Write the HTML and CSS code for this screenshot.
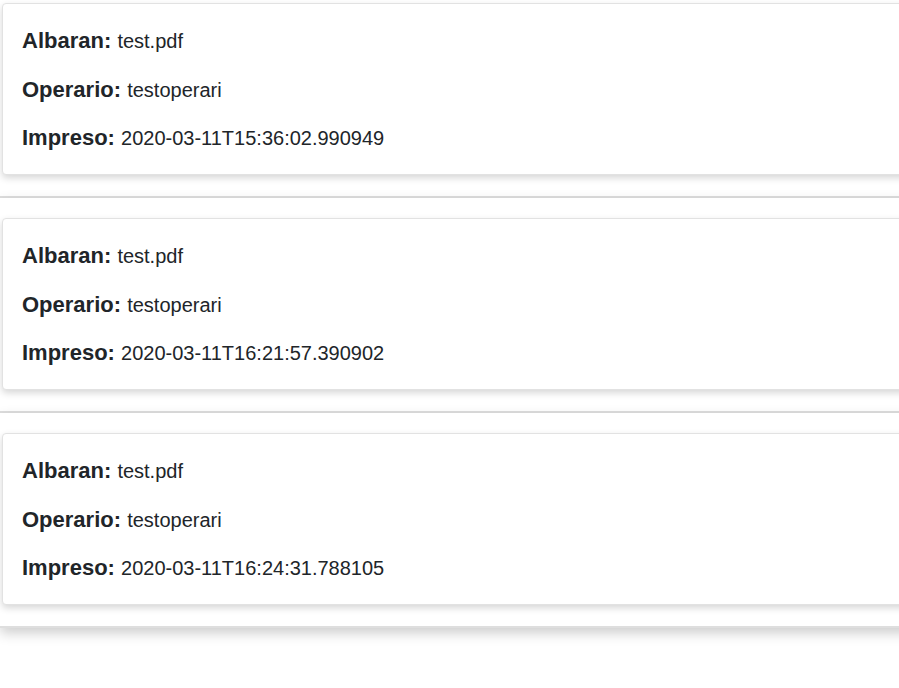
FILE: index.html
```html
<!DOCTYPE html>
<html lang="es">
<head>
<meta charset="utf-8">
<title>Impresiones</title>
<link rel="stylesheet" href="styles.css">
</head>
<body>
<div class="list">
  <div class="item">
    <div class="card">
      <p class="row"><span class="label">Albaran:</span> <span class="value">test.pdf</span></p>
      <p class="row"><span class="label">Operario:</span> <span class="value">testoperari</span></p>
      <p class="row"><span class="label">Impreso:</span> <span class="value">2020-03-11T15:36:02.990949</span></p>
    </div>
  </div>
  <div class="item">
    <div class="card">
      <p class="row"><span class="label">Albaran:</span> <span class="value">test.pdf</span></p>
      <p class="row"><span class="label">Operario:</span> <span class="value">testoperari</span></p>
      <p class="row"><span class="label">Impreso:</span> <span class="value">2020-03-11T16:21:57.390902</span></p>
    </div>
  </div>
  <div class="item">
    <div class="card">
      <p class="row"><span class="label">Albaran:</span> <span class="value">test.pdf</span></p>
      <p class="row"><span class="label">Operario:</span> <span class="value">testoperari</span></p>
      <p class="row"><span class="label">Impreso:</span> <span class="value">2020-03-11T16:24:31.788105</span></p>
    </div>
  </div>
</div>
</body>
</html>
```
FILE: styles.css
```css
html {
  background: #fff;
}
body {
  margin: 0;
  padding: 0 0 40px;
  overflow: hidden;
  font-family: "Liberation Sans", Arial, sans-serif;
  color: #212529;
}
.list {
  width: 940px;
}
.item {
  background: #fff;
  padding: 20px 0 21px 2px;
  border-bottom: 2px solid #dedede;
  box-shadow: 0 5px 12px rgba(0, 0, 0, 0.2);
}
.item:first-child {
  padding-top: 3px;
}
.card {
  background: #fff;
  border: 1px solid #e2e2e2;
  border-radius: 4px;
  box-shadow: 0 3px 7px rgba(0, 0, 0, 0.16);
  padding: 22px 19px 20px;
  height: 128px;
}
.row {
  margin: 0 0 18.5px;
  height: 30px;
  font-size: 22px;
  line-height: 30px;
  white-space: nowrap;
}
.row:last-child {
  margin-bottom: 0;
}
.label {
  font-weight: bold;
  font-size: 22px;
}
.value {
  font-size: 20px;
}
```
